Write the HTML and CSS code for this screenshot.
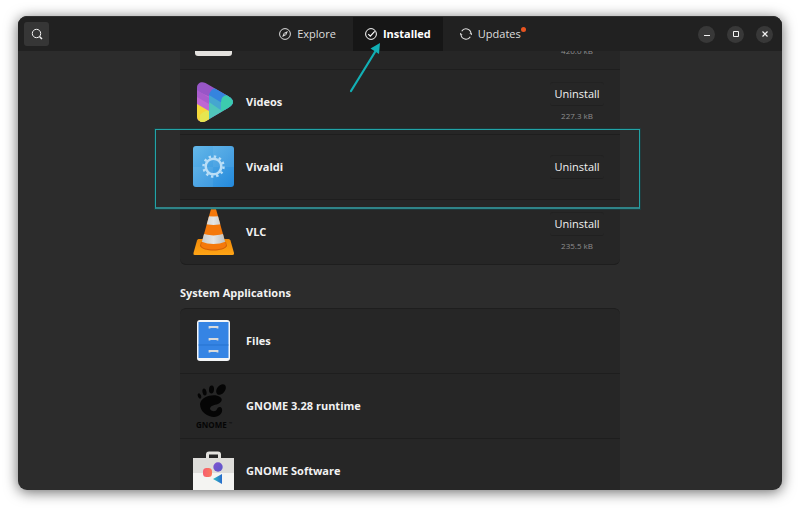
FILE: index.html
```
<!DOCTYPE html>
<html lang="en">

<head>
    <meta charset="UTF-8">
    <meta name="viewport" content="width=device-width, initial-scale=1.0">
    <title>Software</title>
    <link rel="stylesheet" href="styles.css">
</head>

<body>
    <div class="window">
        <header class="headerbar">
            <div class="header-start">
                <button class="search-button" type="button" aria-label="Search">
                    <svg width="12" height="12" viewBox="0 0 12 12" fill="none" stroke="currentColor">
                        <circle cx="5.5" cy="5.5" r="4.2" />
                        <path d="M8.5 8.5L11 11" stroke-width="1.5" />
                    </svg>
                </button>
            </div>

            <nav class="tabs">
                <button class="tab" type="button">
                    <svg width="12" height="12" viewBox="0 0 12 12" fill="none" stroke="currentColor">
                        <circle cx="6" cy="6" r="5.4" />
                        <path d="M8.9 2.9L7.2 7.1 3.1 9 4.800 4.900z" fill="currentColor" stroke="none" />
                        <circle cx="6" cy="6" r="0.8" fill="#212121" stroke="none" />
                    </svg>
                    Explore
                </button>
                <button class="tab active" type="button">
                    <svg width="12" height="12" viewBox="0 0 12 12" fill="none" stroke="currentColor">
                        <circle cx="6" cy="6" r="5.4" />
                        <path d="M3.3 6.2L5.3 8.2 9.7 3.4" stroke-width="1.2" />
                    </svg>
                    Installed
                    <svg class="arrow" width="34" height="54" viewBox="0 0 34 54">
                        <path d="M2 48L26 9" stroke="#12b0b5" stroke-width="2.200" stroke-linecap="round" />
                        <path d="M31 0L30 11 21.500 5.500z" fill="#12b0b5" />
                    </svg>
                </button>
                <button class="tab" type="button">
                    <svg width="12" height="12" viewBox="0 0 12 12" fill="none" stroke="currentColor">
                        <path d="M1.700 3.300A5 5 0 0 1 11 5.500M10.300 8.700A5 5 0 0 1 1 6.500" stroke-width="1.100" />
                        <path d="M9.300 5.300h2.700v2zM2.700 6.700H0v-2z" fill="currentColor" stroke="none" />
                    </svg>
                    Updates
                    <span class="dot"></span>
                </button>
            </nav>

            <div class="header-end">
                <button class="window-button" type="button" aria-label="Minimize">
                    <svg width="8" height="8" viewBox="0 0 8 8" stroke="currentColor">
                        <path d="M1 5.500h6" />
                    </svg>
                </button>
                <button class="window-button" type="button" aria-label="Maximize">
                    <svg width="8" height="8" viewBox="0 0 8 8" fill="none" stroke="currentColor">
                        <path d="M1.500 1.500h5v5h-5z" />
                    </svg>
                </button>
                <button class="window-button" type="button" aria-label="Close">
                    <svg width="8" height="8" viewBox="0 0 8 8" stroke="currentColor">
                        <path d="M1.500 1.500l5 5M6.500 1.500l-5 5" stroke-width="1.200" />
                    </svg>
                </button>
            </div>
        </header>

        <main class="view">
            <div class="content">
                <ul class="app-list">
                    <li class="app-row">
                        <svg class="app-icon" viewBox="0 0 42 42">
                            <rect x="3" y="2" width="37" height="38" rx="3" fill="#e4e2df" />
                        </svg>
                        <div class="app-side">
                            <button class="uninstall" type="button">Uninstall</button>
                            <span class="app-size">420.0 kB</span>
                        </div>
                    </li>
                    <li class="app-row">
                        <svg class="app-icon" viewBox="0 0 42 42">
                            <defs>
                                <clipPath id="play">
                                    <path d="M5 6.500C5 2 9.500 0 13.500 2L36 15Q41 18 41 21T36 27L14 40C9.500 42.500 5 40 5 35.500z" />
                                </clipPath>
                            </defs>
                            <g clip-path="url(#play)">
                                <path d="M5 0h37v42H5z" fill="#9856c7" />
                                <path d="M5 10l13 6v16L5 25z" fill="#bf68d3" />
                                <path d="M5 9l14 9-2 5L5 16z" fill="#aa5dcd" />
                                <path d="M17 14Q18 9 23 7l19 11v14L17 23z" fill="#3584de" />
                                <path d="M17 20l13 8v14H17z" fill="#50c5bb" />
                                <path d="M17 14l13 8v8L17 21z" fill="#45a6d0" />
                                <path d="M29 21Q29 15 35 14h8v18l-14 1z" fill="#3ccbae" />
                                <path d="M5 23l12 7v12H5z" fill="#f5d83a" />
                                <path d="M8 34q5-5 9-4v12H8z" fill="#e6e650" />
                            </g>
                        </svg>
                        <span class="app-name">Videos</span>
                        <div class="app-side">
                            <button class="uninstall" type="button">Uninstall</button>
                            <span class="app-size">227.3 kB</span>
                        </div>
                    </li>
                    <li class="app-row marked">
                        <svg class="app-icon" viewBox="0 0 42 42">
                            <defs>
                                <linearGradient id="blue" x1="0" y1="0" x2="1" y2="1">
                                    <stop offset="0" stop-color="#65b8e9" />
                                    <stop offset="1" stop-color="#2389dc" />
                                </linearGradient>
                            </defs>
                            <rect x="1" y="0" width="41" height="41" rx="3" fill="url(#blue)" />
                            <path d="M21 0h18q3 0 3 3v18H21zM1 21h20v20H4q-3 0-3-3z" fill="#fff" opacity="0.06" />
                            <circle cx="21.500" cy="20.500" r="7.800" fill="none" stroke="#b9def7" stroke-width="2.500" />
                            <circle cx="21.500" cy="20.500" r="10" fill="none" stroke="#b9def7" stroke-width="2.500" stroke-dasharray="2.400 2.836" />
                        </svg>
                        <span class="app-name">Vivaldi</span>
                        <div class="app-side">
                            <button class="uninstall" type="button">Uninstall</button>
                        </div>
                    </li>
                    <li class="app-row">
                        <svg class="app-icon" viewBox="0 0 42 42">
                            <defs>
                                <linearGradient id="base" x1="0" y1="0" x2="0" y2="1">
                                    <stop offset="0" stop-color="#f28a08" />
                                    <stop offset="1" stop-color="#ffa516" />
                                </linearGradient>
                                <linearGradient id="stripe" x1="0" y1="0" x2="1" y2="0">
                                    <stop offset="0" stop-color="#c5c8c8" />
                                    <stop offset="0.5" stop-color="#e4e5e4" />
                                    <stop offset="1" stop-color="#b7baba" />
                                </linearGradient>
                                <clipPath id="cone">
                                    <path d="M19-2q2.500-1.500 5 0l10 36c0 6-25 6-25 0z" />
                                </clipPath>
                            </defs>
                            <path d="M6.500 28h30q1.500 0 2 1.500L42 42q.5 2-1.500 2h-38Q1 44 1.500 42L5 29.500Q5.500 28 6.500 28z" fill="url(#base)" />
                            <path d="M9 31q12.500 8 25 0l1 4c-3 6-24 6-27 0z" fill="#cf5d08" />
                            <g clip-path="url(#cone)">
                                <path d="M5-4h33v44H5z" fill="#f5790b" />
                                <path d="M10 4q11.500 3 23 0v8q-11.500 4-23 0zM8 22q13.500 5 27 0v8q-13.500 6-27 0z" fill="url(#stripe)" />
                            </g>
                        </svg>
                        <span class="app-name">VLC</span>
                        <div class="app-side">
                            <button class="uninstall" type="button">Uninstall</button>
                            <span class="app-size">235.5 kB</span>
                        </div>
                    </li>
                </ul>

                <h2 class="section-title">System Applications</h2>
                <ul class="app-list system">
                    <li class="app-row">
                        <svg class="app-icon" viewBox="0 0 42 42">
                            <rect x="5" y="0" width="33" height="41" rx="3" fill="#f3f5f7" />
                            <path d="M6.500 2h30v36h-30z" fill="#3584e4" />
                            <path d="M6.500 25h30" stroke="#2672cf" />
                            <path d="M17.500 8.500V7h8v1.500M17.500 20.500V19h8v1.500M17.500 32.500V31h8v1.500" fill="none" stroke="#d8dadb" stroke-width="1.800" />
                        </svg>
                        <span class="app-name">Files</span>
                    </li>
                    <li class="app-row">
                        <svg class="app-icon" viewBox="0 0 42 42">
                            <g fill="#050505">
                                <ellipse cx="29" cy="4.500" rx="4" ry="6" transform="rotate(38 29 4.500)" />
                                <ellipse cx="19.500" cy="4.500" rx="2.500" ry="4" transform="rotate(5 19.500 4.500)" />
                                <ellipse cx="12.500" cy="7" rx="2" ry="3.500" transform="rotate(-12 12.500 7)" />
                                <ellipse cx="7.500" cy="11" rx="1.600" ry="2.800" transform="rotate(-25 7.500 11)" />
                                <path d="M28 12C23 8 9 11 8 19c0 8 8 13 14 13 5 0 9-4 8-8-1-3-4-2-5 0-1 3-5 3-7 0 0-3 4-4 8-5 4-2 5-5 2-7z" />
                                <text class="gnome-word" x="4" y="43">GNOME</text>
                                <text class="gnome-mark" x="37" y="40">™</text>
                            </g>
                        </svg>
                        <span class="app-name">GNOME 3.28 runtime</span>
                    </li>
                    <li class="app-row">
                        <svg class="app-icon" viewBox="0 0 42 42">
                            <defs>
                                <linearGradient id="violet" x1="0" y1="0" x2="1" y2="1">
                                    <stop offset="0" stop-color="#8051d0" />
                                    <stop offset="1" stop-color="#5958c9" />
                                </linearGradient>
                                <linearGradient id="coral" x1="0" y1="0" x2="1" y2="0">
                                    <stop offset="0" stop-color="#f65d70" />
                                    <stop offset="1" stop-color="#fa795a" />
                                </linearGradient>
                                <linearGradient id="teal" x1="0" y1="0" x2="1" y2="0">
                                    <stop offset="0" stop-color="#2fc2c1" />
                                    <stop offset="1" stop-color="#286bcc" />
                                </linearGradient>
                            </defs>
                            <path d="M15.500 9V4.500q0-1.500 1.500-1.500h9q1.500 0 1.500 1.500V9" fill="none" stroke="#e4e3df" stroke-width="3" />
                            <path d="M1 8h41v36H1z" fill="#f4f4f2" />
                            <path d="M1 8h41v15H1z" fill="#deddda" />
                            <circle cx="26" cy="17" r="4.700" fill="url(#violet)" />
                            <rect x="11" y="18" width="9" height="9" rx="3.500" fill="url(#coral)" />
                            <path d="M21 29l9-5v10z" fill="url(#teal)" />
                        </svg>
                        <span class="app-name">GNOME Software</span>
                    </li>
                </ul>
            </div>
        </main>
    </div>
</body>

</html>
```
FILE: styles.css
```
* {
    box-sizing: border-box;
    margin: 0;
    padding: 0;
}

body {
    height: 100vh;
    padding: 16px 18px 20px;
    background-color: #fff;
    font-family: "Open Sans", "Noto Sans", sans-serif;
    font-size: 11px;
    line-height: 16px;
    color: #f2f2f2;
    overflow: hidden;
}

button {
    border: 0;
    background: none;
    color: inherit;
    font: inherit;
}

svg {
    display: block;
    flex-shrink: 0;
}

.window {
    display: flex;
    flex-direction: column;
    height: 100%;
    border-radius: 9px;
    background-color: #2c2c2c;
    box-shadow: 0 2px 14px rgba(0, 0, 0, 0.6);
}

/* header bar */
.headerbar {
    display: grid;
    grid-template-columns: 1fr auto 1fr;
    align-items: center;
    height: 35px;
    border-top: 1px solid #303030;
    border-radius: 9px 9px 0 0;
    background-color: #212121;
}

.header-start {
    padding-left: 6px;
}

.search-button {
    display: flex;
    align-items: center;
    justify-content: center;
    width: 25px;
    height: 24px;
    border-radius: 3px;
    background-color: #363636;
}

.tabs {
    display: flex;
    gap: 5px;
    height: 100%;
}

.tab {
    position: relative;
    display: flex;
    align-items: center;
    gap: 6px;
    padding: 0 12px;
    color: #dedede;
}

.tab.active {
    background-color: #161616;
    font-weight: bold;
    color: #fff;
}

.dot {
    position: absolute;
    top: 10px;
    right: 7px;
    width: 5px;
    height: 5px;
    border-radius: 50%;
    background-color: #e95420;
}

.arrow {
    position: absolute;
    top: 26px;
    left: -4px;
    z-index: 2;
}

.header-end {
    display: flex;
    justify-content: flex-end;
    gap: 12px;
    padding-right: 9px;
}

.window-button {
    display: flex;
    align-items: center;
    justify-content: center;
    width: 17px;
    height: 17px;
    border-radius: 50%;
    background-color: #383838;
}

/* scrolled list of apps */
.view {
    flex: 1;
    min-height: 0;
    overflow: hidden;
    border-radius: 0 0 9px 9px;
}

.content {
    max-width: 440px;
    margin: -46px auto 0;
}

.app-list {
    list-style: none;
    border-radius: 6px;
    background-color: #262626;
}

.app-row {
    position: relative;
    display: flex;
    align-items: center;
    gap: 12px;
    height: 65px;
    padding: 0 16px 0 12px;
    border-bottom: 1px solid #1e1e1e;
}

.app-row:last-child {
    border-radius: 0 0 6px 6px;
}

.app-list.system {
    border-top: 1px solid #1e1e1e;
}

.marked::after {
    content: "";
    position: absolute;
    top: -6px;
    right: -20px;
    bottom: -10px;
    left: -25px;
    z-index: 1;
    border: 1px solid #22a3a6;
    border-bottom: 2px solid #2f8488;
    box-shadow: 0 0 0 1px rgba(0, 100, 105, 0.3);
    pointer-events: none;
}

.app-icon {
    width: 42px;
    height: 42px;
    overflow: visible;
}

.gnome-word {
    font-size: 8px;
    font-weight: bold;
}

.gnome-mark {
    font-size: 4px;
}

.app-name {
    font-weight: bold;
}

.app-side {
    display: flex;
    flex-direction: column;
    align-items: center;
    gap: 4px;
    margin-left: auto;
}

.uninstall {
    width: 54px;
    height: 24px;
    border-top: 1px solid #222;
    border-bottom: 1px solid #202020;
    border-radius: 3px;
}

.app-size {
    font-size: 8px;
    line-height: 12px;
    color: #8e8e8e;
}

.section-title {
    margin: 20px 0 7px;
    font-size: 11px;
    line-height: 16px;
}
```
